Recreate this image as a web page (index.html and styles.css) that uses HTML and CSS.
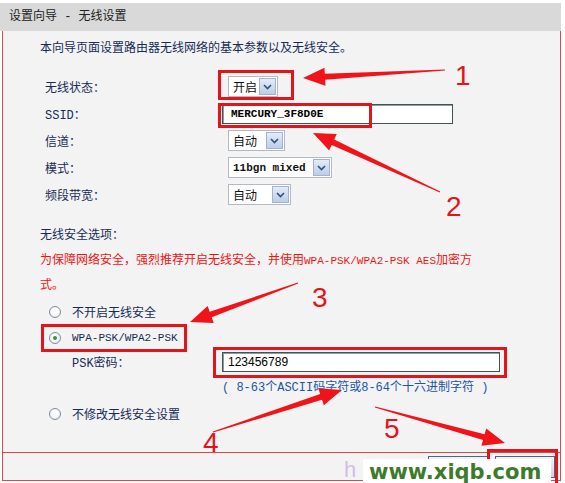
FILE: index.html
```html
<!DOCTYPE html>
<html lang="zh-CN">
<head>
    <meta charset="utf-8">
    <title>设置向导 - 无线设置</title>
    <link rel="stylesheet" href="styles.css">
</head>
<body>

    <div class="wizard">
        <div class="wizard-title">设置向导 - 无线设置</div>

        <div class="wizard-body">
            <p class="intro">本向导页面设置路由器无线网络的基本参数以及无线安全。</p>

            <div class="form-row">
                <span class="form-label">无线状态：</span>
                <span class="select select-sm">开启<span class="select-btn"><svg width="9" height="6" viewBox="0 0 9 6"><path d="M1 1l3.5 3.5L8 1" fill="none" stroke="#2f4f86" stroke-width="1.6"/></svg></span></span>
            </div>
            <div class="form-row">
                <span class="form-label">SSID：</span>
                <input class="text-input ssid" type="text" value="MERCURY_3F8D0E">
            </div>
            <div class="form-row">
                <span class="form-label">信道：</span>
                <span class="select select-md">自动<span class="select-btn"><svg width="9" height="6" viewBox="0 0 9 6"><path d="M1 1l3.5 3.5L8 1" fill="none" stroke="#2f4f86" stroke-width="1.6"/></svg></span></span>
            </div>
            <div class="form-row">
                <span class="form-label">模式：</span>
                <span class="select select-lg"><span class="latin">11bgn mixed</span><span class="select-btn"><svg width="9" height="6" viewBox="0 0 9 6"><path d="M1 1l3.5 3.5L8 1" fill="none" stroke="#2f4f86" stroke-width="1.6"/></svg></span></span>
            </div>
            <div class="form-row">
                <span class="form-label">频段带宽：</span>
                <span class="select select-bw">自动<span class="select-btn"><svg width="9" height="6" viewBox="0 0 9 6"><path d="M1 1l3.5 3.5L8 1" fill="none" stroke="#2f4f86" stroke-width="1.6"/></svg></span></span>
            </div>

            <p class="section-title">无线安全选项：</p>
            <p class="warn">为保障网络安全，强烈推荐开启无线安全，并使用<span class="latin">WPA-PSK/WPA2-PSK AES</span>加密方式。</p>

            <div class="radio-row"><span class="radio"></span>不开启无线安全</div>
            <div class="radio-row"><span class="radio checked"></span><span class="latin">WPA-PSK/WPA2-PSK</span></div>
            <div class="psk-row">
                <span class="psk-label">PSK密码：</span>
                <input class="text-input psk-input" type="text" value="123456789">
            </div>
            <div class="hint">( 8-63个ASCII码字符或8-64个十六进制字符 )</div>
            <div class="radio-row radio-last"><span class="radio"></span>不修改无线安全设置</div>
        </div>

        <div class="wizard-foot">
            <button class="btn">上一步</button>
            <button class="btn">下一步</button>
        </div>
    </div>

    <!-- annotations drawn on top of the screenshot -->
    <svg class="marks" width="565" height="483" viewBox="0 0 565 483">
        <g fill="none" stroke="#e3141a" stroke-width="3">
            <rect x="219.5" y="71.5" width="73" height="27"/>
            <rect x="219.5" y="104.5" width="151" height="22"/>
            <rect x="42.5" y="325.5" width="143" height="25"/>
            <rect x="214.5" y="348.5" width="291" height="28"/>
            <rect x="488.5" y="450.5" width="68" height="36"/>
        </g>
        <g fill="#f0141a">
            <polygon points="444.97,69.5 324.8,73.76 324.46,67.77 303,78 325.48,85.75 325.14,79.76 445.03,70.5"/>
            <polygon points="440.21,191.55 334.21,139.55 336.74,134.11 313,133 329.16,150.43 331.69,144.99 439.79,192.45"/>
            <polygon points="297.83,282.53 209.67,311.71 207.63,306.07 190,322 213.75,322.99 211.71,317.35 298.17,283.47"/>
            <polygon points="213.15,432.48 322.01,399.66 323.87,405.37 342,390 318.29,388.25 320.15,393.96 212.85,431.52"/>
            <polygon points="374.87,407.48 483.0,440.02 481.4,445.8 505,443 486.2,428.46 484.6,434.24 375.13,406.52"/>
        </g>
        <g class="mark-num">
            <text x="455" y="85">1</text>
            <text x="446" y="216">2</text>
            <text x="312" y="307">3</text>
            <text x="203" y="452">4</text>
            <text x="384" y="438">5</text>
        </g>
        <text class="wm-ghost" x="344" y="477">h</text>
        <rect x="363" y="459" width="188" height="26" fill="#fff"/>
        <text class="wm-text" x="369" y="479">www.xiqb.com</text>
    </svg>

</body>
</html>
```

FILE: styles.css
```css
* {
    margin: 0;
    padding: 0;
    box-sizing: border-box;
}

body {
    position: relative;
    width: 565px;
    height: 483px;
    overflow: hidden;
    font-family: "Liberation Mono", "Noto Sans CJK SC", monospace;
    font-size: 12px;
    color: #172b55;
    background: #fff;
}

.latin {
    font-size: 11px;
}

.wizard {
    width: 561px;
    margin-top: 3px;
}

.wizard-title {
    height: 28px;
    line-height: 28px;
    padding-left: 9px;
    background: #d9d9d9;
    color: #222;
}

.wizard-body {
    margin-left: 2px;
    padding: 9px 0 25px;
    background: #f3f3f3;
    border-left: 1px solid #d14d4d;
    border-right: 1px solid #d14d4d;
}

.intro {
    padding-left: 37px;
    line-height: 18px;
    margin-bottom: 15px;
}

.form-row {
    display: flex;
    align-items: center;
    height: 27px;
    padding-left: 42px;
}

.form-label {
    width: 177px;
}

.select {
    display: flex;
    align-items: center;
    height: 21px;
    margin-left: 6px;
    padding-left: 4px;
    background: #fff;
    border: 1px solid #b3bac4;
    color: #111;
}

.select-sm { width: 50px; }
.select-md { width: 57px; }
.select-lg { width: 104px; }
.select-bw { width: 63px; }

.select .latin {
    font-weight: bold;
}

.select-btn {
    display: flex;
    align-items: center;
    justify-content: center;
    width: 17px;
    height: 17px;
    margin-left: auto;
    margin-right: 1px;
    background: linear-gradient(#e4ecf7, #bccde6);
    border: 1px solid #9fb3d2;
}

.text-input {
    height: 20px;
    background: #fff;
    border: 1px solid #3f5656;
    box-shadow: inset 1px 1px 0 #8e9c9c;
    color: #000;
    font-family: "Liberation Mono", monospace;
    font-size: 11px;
    outline: none;
}

.ssid {
    width: 231px;
    padding-left: 8px;
    font-weight: bold;
}

.section-title {
    margin-top: 19px;
    padding-left: 37px;
    line-height: 18px;
}

.warn {
    width: 476px;
    margin-top: 4px;
    padding-left: 37px;
    line-height: 25px;
    color: #f01414;
}

.radio-row {
    display: flex;
    align-items: center;
    height: 26px;
    padding-left: 46px;
}

.radio-last {
    margin-top: 2px;
}

.radio {
    position: relative;
    width: 12px;
    height: 12px;
    margin-right: 11px;
    border: 1px solid #7d8ea3;
    border-radius: 50%;
    background: radial-gradient(circle at 50% 40%, #fff 30%, #dde4eb);
}

.radio.checked::after {
    content: "";
    position: absolute;
    left: 3px;
    top: 3px;
    width: 4px;
    height: 4px;
    border-radius: 50%;
    background: #2f9a38;
}

.psk-row {
    display: flex;
    align-items: center;
    height: 22px;
    padding-left: 69px;
}

.psk-label {
    width: 150px;
}

.psk-input {
    width: 278px;
    padding-left: 5px;
    font-family: "Liberation Sans", sans-serif;
    font-size: 12px;
}

.hint {
    margin-top: 4px;
    padding-left: 219px;
    line-height: 22px;
    color: #1f55a8;
}

.wizard-foot {
    display: flex;
    justify-content: flex-end;
    align-items: center;
    gap: 7px;
    height: 29px;
    margin-left: 2px;
    padding-right: 5px;
    background: #f3f3f3;
    border: 1px solid #d14d4d;
}

.btn {
    width: 60px;
    height: 22px;
    background: linear-gradient(#f0f4f9, #c7d4e4);
    border: 1px solid #4d6482;
    font-family: "Noto Sans CJK SC", sans-serif;
    font-size: 12px;
    letter-spacing: 5px;
    color: #111;
}

.marks {
    position: absolute;
    top: 0;
    left: 0;
}

.mark-num {
    font-family: "Liberation Sans", sans-serif;
    font-size: 28px;
    fill: #e3141a;
}

.wm-ghost {
    font-family: "Liberation Sans", sans-serif;
    font-size: 22px;
    fill: #d3bde3;
}

.wm-text {
    font-family: "DejaVu Sans", sans-serif;
    font-weight: bold;
    font-size: 21px;
    fill: #3b7b2b;
}
```
